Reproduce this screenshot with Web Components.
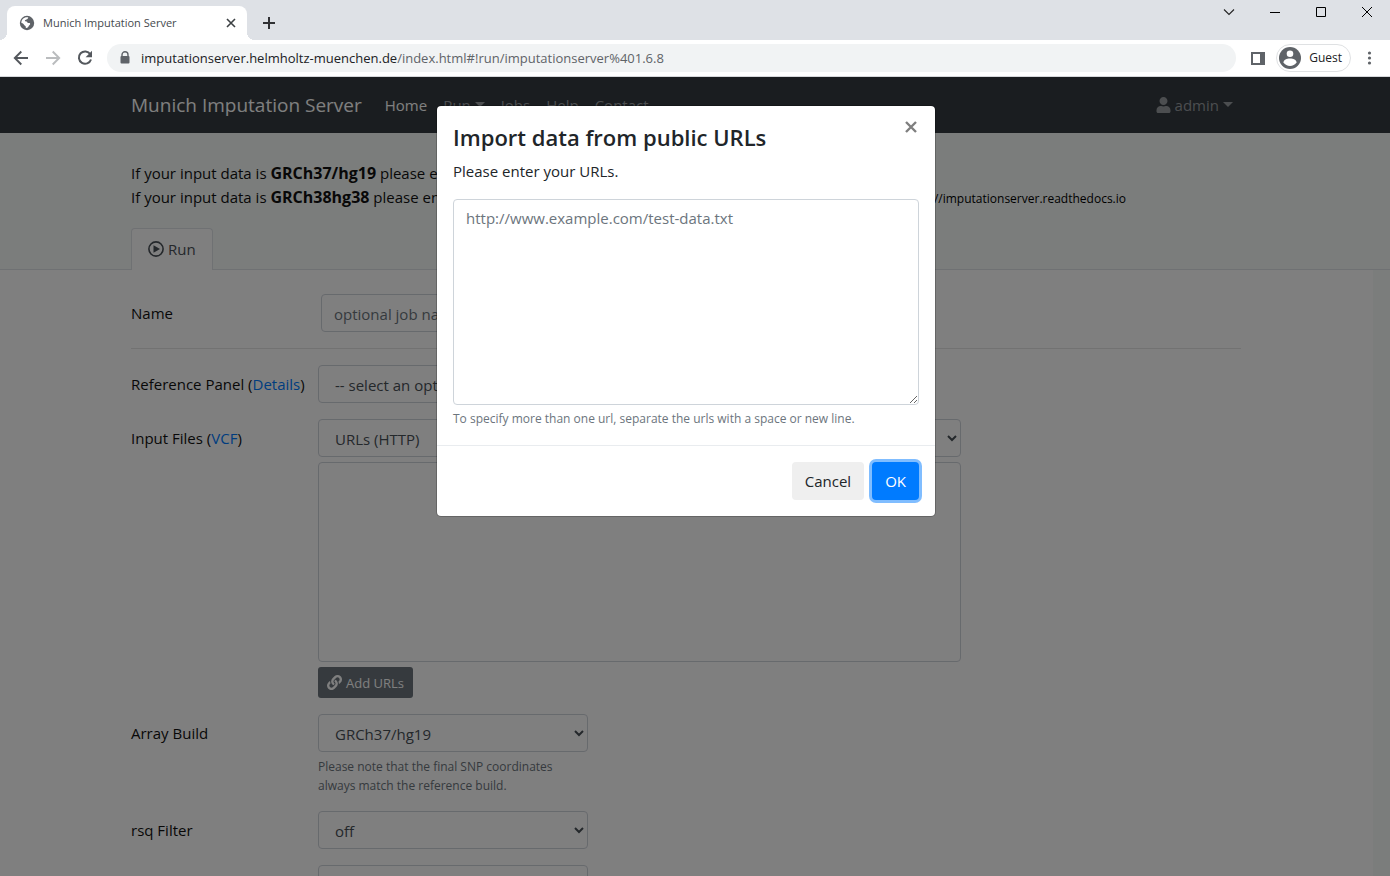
<!DOCTYPE html>
<html lang="en">
<head>
<meta charset="utf-8">
<title>Munich Imputation Server</title>
<style>
html, body { margin: 0; height: 100%; }
body { font-family: "Open Sans", "Noto Sans", sans-serif; font-size: 15px; line-height: 24px; color: #212529; overflow: hidden; }
</style>
</head>
<body>
<browser-window></browser-window>

<script>
function define(name, markup) {
  const template = document.createElement('template');
  template.innerHTML = markup;
  customElements.define(name, class extends HTMLElement {
    constructor() {
      super();
      this.attachShadow({ mode: 'open' }).append(template.content.cloneNode(true));
    }
  });
}

define('tab-strip', `
<style>
:host { display: flex; height: 40px; background: #dee1e6; justify-content: space-between; }
button { border: 0; background: none; padding: 0; display: flex; align-items: center; justify-content: center; }
.left { display: flex; align-items: flex-end; padding-left: 7px; }
.tab { position: relative; display: flex; align-items: center; box-sizing: border-box; width: 240px; height: 34px; padding: 0 8px 0 12px; background: #fff; border-radius: 8px 8px 0 0; font-size: 11px; color: #45494d; }
.tab::before, .tab::after { content: ""; position: absolute; bottom: 0; width: 8px; height: 8px; }
.tab::before { left: -8px; background: radial-gradient(circle at 0 0, transparent 8px, #fff 8px); }
.tab::after { right: -8px; background: radial-gradient(circle at 100% 0, transparent 8px, #fff 8px); }
.tab span { flex: 1; padding-left: 8px; white-space: nowrap; }
.tab button { width: 16px; height: 16px; }
.new { width: 28px; height: 34px; margin-left: 8px; }
.win { display: flex; height: 24px; }
.win button { width: 46px; }
</style>
<div class="left">
  <div class="tab">
    <svg width="16" height="16" viewBox="0 0 16 16"><circle cx="8" cy="8" r="7.200" fill="#5f6368"/><path d="M9.300 2.300c-.6.900-.2 1.600-1.500 2.100-1 .4-2 .5-1.900 1.400.1.700 1 .5 1.700.8.8.4.5 1.300 1.500 1.400 1.100.1 2-.1 2.100.9 0 .9-1.100 1.200-1.500 2-.4.800-.9 1.900-2.300 2.200-.8 0-.7-.8-.7-1.500-.1-.9-1.300-.9-1.700-1.800-.3-1-.9-1.500-2.600-1.900-.1-3.200 2.400-6.200 6.900-5.600z" fill="#fff"/><path d="M6.500 4.900l3-.7 1.700.9-1.300 1.300-2.200-.3z" fill="#5f6368"/></svg>
    <span>Munich Imputation Server</span>
    <button aria-label="Close tab"><svg width="10" height="10" viewBox="0 0 10 10"><path d="M1 1l8 8M9 1l-8 8" stroke="#3c4043" stroke-width="1.600"/></svg></button>
  </div>
  <button class="new" aria-label="New tab"><svg width="14" height="14" viewBox="0 0 14 14"><path d="M7 1v12M1 7h12" stroke="#303134" stroke-width="2"/></svg></button>
</div>
<div class="win">
  <button aria-label="Search tabs"><svg width="12" height="12" viewBox="0 0 12 12"><path d="M1 3.500l5 5 5-5" fill="none" stroke="#222" stroke-width="1.100"/></svg></button>
  <button aria-label="Minimize"><svg width="10" height="10" viewBox="0 0 10 10"><path d="M0 5.500h10" stroke="#000"/></svg></button>
  <button aria-label="Maximize"><svg width="10" height="10" viewBox="0 0 10 10"><path d="M.5.500h9v9h-9z" fill="none" stroke="#000"/></svg></button>
  <button aria-label="Close window"><svg width="10" height="10" viewBox="0 0 10 10"><path d="M0 0l10 10M10 0L0 10" stroke="#000"/></svg></button>
</div>`);

define('address-bar', `
<style>
:host { display: flex; align-items: center; box-sizing: border-box; height: 37px; padding: 0 14px 0 13px; background: #fff; border-bottom: 1px solid #d6d8db; }
button { border: 0; background: none; padding: 0; display: flex; font: inherit; }
.nav { display: flex; gap: 16px; }
.url { flex: 1; min-width: 0; display: flex; align-items: center; height: 28px; margin-left: 14px; padding: 0 12px; background: #f1f3f4; border-radius: 14px; font-size: 13px; color: #5f6368; white-space: nowrap; }
.url svg { margin-right: 10px; }
.url b { font-weight: 400; color: #202124; }
.panel { margin-left: 15px; }
.guest { align-items: center; gap: 8px; height: 28px; margin: 0 12px 0 10px; padding: 0 8px 0 2px; box-sizing: border-box; border: 1px solid #dfe1e3; border-radius: 14px; font-size: 12px; color: #202124; }
</style>
<div class="nav">
  <button aria-label="Back"><svg width="16" height="16" viewBox="0 0 16 16"><path d="M15 8H2M8.300 1.500L1.800 8l6.500 6.500" fill="none" stroke="#54585d" stroke-width="1.900"/></svg></button>
  <button aria-label="Forward"><svg width="16" height="16" viewBox="0 0 16 16"><path d="M1 8h13M7.700 1.500L14.200 8l-6.500 6.500" fill="none" stroke="#babcbe" stroke-width="1.900"/></svg></button>
  <button aria-label="Reload"><svg width="16" height="16" viewBox="0 0 16 16"><path d="M13.300 4.200A6.200 6.200 0 1 0 14 9.500" fill="none" stroke="#54585d" stroke-width="2"/><path d="M15 .8v6.400H8.600z" fill="#54585d"/></svg></button>
</div>
<div class="url">
  <svg width="12" height="14" viewBox="0 0 12 14"><path d="M3 6V3.800a3 3 0 0 1 6 0V6" fill="none" stroke="#5f6368" stroke-width="1.400"/><rect x="1.500" y="5" width="9" height="7.500" rx="1" fill="#5f6368"/></svg>
  <span><b>imputationserver.helmholtz-muenchen.de</b>/index.html#!run/imputationserver%401.6.8</span>
</div>
<button class="panel" aria-label="Side panel"><svg width="15" height="15" viewBox="0 0 15 15"><path d="M0 1h14v13H0zM2 3v9h7V3z" fill="#5f6368" fill-rule="evenodd"/></svg></button>
<button class="guest"><svg width="22" height="22" viewBox="0 0 22 22"><circle cx="11" cy="11" r="11" fill="#5f6368"/><circle cx="11" cy="6.700" r="3.300" fill="#fff"/><path d="M4.500 15.500c0-2.500 3.200-3.900 6.500-3.900s6.500 1.400 6.500 3.900c-1.500 2.200-3.800 3.500-6.500 3.500s-5-1.300-6.500-3.500z" fill="#fff"/></svg>Guest</button>
<button aria-label="Menu"><svg width="13" height="16" viewBox="0 0 13 16"><g fill="#5f6368"><circle cx="6.500" cy="3" r="1.600"/><circle cx="6.500" cy="8" r="1.600"/><circle cx="6.500" cy="13" r="1.600"/></g></svg></button>`);

define('site-nav', `
<style>
:host { display: block; background: #343a40; }
nav { display: flex; align-items: center; height: 56px; max-width: 1110px; margin: 0 auto; padding: 0 33px 0 15px; color: #999da0; }
a { color: inherit; text-decoration: none; display: flex; align-items: center; }
.brand { color: #fff; font-size: 19px; margin-right: 23px; }
.on { color: #fff; }
.links { display: flex; gap: 16px; flex: 1; }
i { border: solid transparent; border-top-color: currentColor; border-width: 5px 5px 0; margin: 0 0 2px 4px; }
.user { padding-right: 8px; }
.user svg { margin-right: 4px; }
</style>
<nav>
  <a class="brand" href="#">Munich Imputation Server</a>
  <div class="links"><a class="on" href="#">Home</a><a href="#">Run<i></i></a><a href="#">Jobs</a><a href="#">Help</a><a href="#">Contact</a></div>
  <a class="user" href="#"><svg width="15" height="16" viewBox="0 0 448 512"><path fill="currentColor" d="M224 256c70.700 0 128-57.300 128-128S294.700 0 224 0 96 57.300 96 128s57.300 128 128 128zm89.600 32h-16.700c-22.200 10.200-46.900 16-72.900 16s-50.600-5.800-72.900-16h-16.700C60.200 288 0 348.200 0 422.400V464c0 26.500 21.500 48 48 48h352c26.500 0 48-21.500 48-48v-41.600c0-74.200-60.200-134.400-134.400-134.400z"/></svg>admin<i></i></a>
</nav>`);

define('page-intro', `
<style>
:host { display: block; border-bottom: 1px solid #dee2e6; }
.in { max-width: 1110px; margin: 0 auto; padding: 28px 33px 0 15px; white-space: nowrap; }
p { margin: 0; height: 24px; color: #111; }
b { font-size: 16px; }
.last { display: flex; justify-content: space-between; align-items: baseline; padding-right: 115px; margin-bottom: 19px; }
small { font-size: 12px; color: #000; }
.tab { display: inline-flex; align-items: center; gap: 4px; box-sizing: border-box; height: 42px; margin-bottom: -1px; padding: 0 16px 1px; border: 1px solid #dee2e6; border-bottom: 0; border-radius: 4px 4px 0 0; background: #fff; color: #495057; text-decoration: none; vertical-align: top; }
</style>
<div class="in">
  <p>If your input data is <b>GRCh37/hg19</b> please e</p>
  <p class="last"><span>If your input data is <b>GRCh38hg38</b> please en</span><small>//imputationserver.readthedocs.io</small></p>
  <a class="tab" href="#"><svg width="16" height="16" viewBox="0 0 16 16"><circle cx="8" cy="8" r="7.100" fill="none" stroke="currentColor" stroke-width="1.600"/><path d="M5.500 4.200v7.600L12 8z" fill="currentColor"/></svg>Run</a>
</div>`);

define('form-row', `
<style>
:host { display: grid; grid-template-columns: 187px minmax(0, 1fr); margin-bottom: 16px; }
.label { padding-top: 7px; color: #111; white-space: nowrap; }
.field { grid-column: 2; }
</style>
<div class="label"><slot name="label"></slot></div>
<div class="field"><slot></slot></div>`);

define('job-form', `
<style>
:host { display: block; background: #fff; margin-right: 17px; }
form { max-width: 1110px; margin: 0 auto; padding: 24px 16px 0 15px; }
input, select { display: block; box-sizing: border-box; height: 38px; border: 1px solid #ced4da; border-radius: 4px; background: #fff; color: #495057; font: inherit; line-height: 24px; }
input { width: 400px; margin-left: 3px; padding: 2px 12px 0; }
input::placeholder { color: #6c757d; }
select { width: 270px; padding: 2px 0 0 12px; }
.wide { width: 643px; }
.list { box-sizing: border-box; width: 643px; height: 200px; margin: 5px 0; border: 1px solid #ced4da; border-radius: 4px; }
hr { border: 0; border-top: 1px solid #e5e5e5; margin: 0 0 16px; }
a { color: #007bff; text-decoration: none; }
button { display: flex; align-items: center; gap: 4px; height: 31px; padding: 0 9px; border: 0; border-radius: 3px; background: #6c757d; color: #fff; font: inherit; font-size: 13px; }
small { display: block; padding-top: 5px; font-size: 12px; line-height: 19px; color: #6c757d; }
</style>
<form>
  <form-row><label slot="label" for="name">Name</label><input id="name" placeholder="optional job name"></form-row>
  <hr>
  <form-row><span slot="label"><label for="panel">Reference Panel</label> (<a href="#">Details</a>)</span><select id="panel"><option>-- select an option --</option></select></form-row>
  <form-row><span slot="label"><label for="source">Input Files</label> (<a href="#">VCF</a>)</span><select id="source" class="wide"><option>URLs (HTTP)</option></select>
    <div class="list"></div>
    <button type="button"><svg width="15" height="15" viewBox="0 0 512 512"><path fill="currentColor" d="M326.612 185.391c59.747 59.809 58.927 155.698.36 214.590-.110.120-.240.250-.360.370l-67.200 67.200c-59.270 59.270-155.699 59.262-214.960 0-59.270-59.260-59.270-155.700 0-214.960l37.106-37.106c9.840-9.840 26.786-3.300 27.294 10.606.648 17.722 3.826 35.527 9.690 52.721 1.986 5.822.567 12.262-3.783 16.612l-13.087 13.087c-28.026 28.026-28.905 73.660-1.155 101.960 28.024 28.579 74.086 28.749 102.325.510l67.200-67.190c28.191-28.191 28.073-73.757 0-101.830-3.701-3.694-7.429-6.564-10.341-8.569a16.037 16.037 0 0 1-6.947-12.606c-.396-10.567 3.348-21.456 11.698-29.806l21.054-21.055c5.521-5.521 14.182-6.199 20.584-1.731a152.482 152.482 0 0 1 20.522 17.197zM467.547 44.449c-59.261-59.262-155.690-59.270-214.960 0l-67.200 67.200c-.120.120-.250.250-.360.370-58.566 58.892-59.387 154.781.360 214.590a152.454 152.454 0 0 0 20.521 17.196c6.402 4.468 15.064 3.789 20.584-1.731l21.054-21.055c8.350-8.350 12.094-19.239 11.698-29.806a16.037 16.037 0 0 0-6.947-12.606c-2.912-2.005-6.640-4.875-10.341-8.569-28.073-28.073-28.191-73.639 0-101.830l67.200-67.190c28.239-28.239 74.300-28.069 102.325.510 27.750 28.300 26.872 73.934-1.155 101.960l-13.087 13.087c-4.350 4.350-5.769 10.790-3.783 16.612 5.864 17.194 9.042 34.999 9.690 52.721.509 13.906 17.454 20.446 27.294 10.606l37.106-37.106c59.271-59.259 59.271-155.699.001-214.959z"/></svg>Add URLs</button></form-row>
  <form-row><label slot="label" for="build">Array Build</label><select id="build"><option>GRCh37/hg19</option></select><small>Please note that the final SNP coordinates<br>always match the reference build.</small></form-row>
  <form-row><label slot="label" for="rsq">rsq Filter</label><select id="rsq"><option>off</option></select></form-row>
  <form-row><select aria-label="Phasing"><option></option></select></form-row>
</form>`);

define('url-dialog', `
<style>
:host { display: flex; justify-content: center; align-items: flex-start; position: absolute; inset: 0; z-index: 2; padding: 28px 18px 0 0; background: rgba(0, 0, 0, .5); }
.box { width: 498px; border: 1px solid rgba(0, 0, 0, .2); border-radius: 5px; background: #fff; background-clip: padding-box; }
.body { position: relative; padding: 16px; }
h5 { margin: 0 0 9px; font-size: 22px; line-height: 30px; font-weight: 600; }
.close { position: absolute; top: 10px; right: 13px; width: 22px; height: 22px; padding: 0; border: 0; background: none; color: #7f7f7f; }
.close svg { display: block; margin: auto; }
label { display: block; margin-bottom: 18px; line-height: 20px; }
textarea { display: block; box-sizing: border-box; width: 100%; height: 206px; padding: 6px 12px; border: 1px solid #ced4da; border-radius: 4px; font: inherit; line-height: 24px; color: #495057; }
textarea::placeholder { color: #6c757d; }
small { display: block; padding-top: 4px; font-size: 12px; line-height: 20px; color: #6c757d; }
.foot { display: flex; justify-content: flex-end; gap: 8px; padding: 16px; border-top: 1px solid #e9ecef; }
.foot button { height: 38px; padding: 0 13px; border: 0; border-radius: 4px; background: #efefef; color: #212529; font: inherit; }
.foot .ok { background: #007bff; color: #fff; box-shadow: 0 0 0 3px #80bdff; }
</style>
<div class="box" role="dialog" aria-labelledby="t">
  <div class="body">
    <h5 id="t">Import data from public URLs</h5>
    <button class="close" aria-label="Close"><svg width="12" height="12" viewBox="0 0 12 12"><path d="M1 1l10 10M11 1L1 11" stroke="currentColor" stroke-width="2.400"/></svg></button>
    <label for="urls">Please enter your URLs.</label>
    <textarea id="urls" placeholder="http://www.example.com/test-data.txt"></textarea>
    <small>To specify more than one url, separate the urls with a space or new line.</small>
  </div>
  <div class="foot"><button>Cancel</button><button class="ok">OK</button></div>
</div>`);

define('browser-window', `
<style>
:host { display: flex; flex-direction: column; height: 100vh; }
main { position: relative; flex: 1; min-height: 0; overflow: hidden; background: #f7fbf9; }
</style>
<tab-strip></tab-strip>
<address-bar></address-bar>
<main>
  <site-nav></site-nav>
  <page-intro></page-intro>
  <job-form></job-form>
  <url-dialog></url-dialog>
</main>`);
</script>
</body>
</html>
